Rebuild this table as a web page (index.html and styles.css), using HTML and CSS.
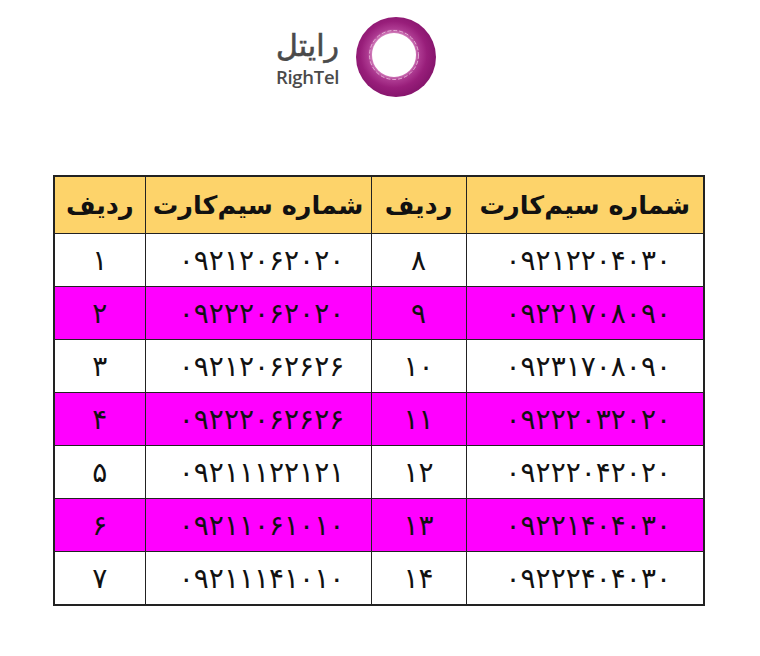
FILE: index.html
```html
<!DOCTYPE html>
<html lang="fa">
<head>
<meta charset="utf-8">
<title>RighTel</title>
<link rel="stylesheet" href="styles.css">
</head>
<body>
<div class="logo">
  <div class="brand">
    <div class="brand-fa" dir="rtl">رایتل</div>
    <div class="brand-en">RighTel</div>
  </div>
  <svg class="ring" width="82" height="82" viewBox="0 0 82 82">
    <defs>
      <radialGradient id="rg" cx="0.47" cy="0.47" r="0.52">
        <stop offset="0.5" stop-color="#d98cc4"/>
        <stop offset="0.62" stop-color="#ad3a91"/>
        <stop offset="0.8" stop-color="#981e7a"/>
        <stop offset="1" stop-color="#88166e"/>
      </radialGradient>
    </defs>
    <circle cx="41" cy="41" r="40" fill="url(#rg)"/>
    <circle cx="39" cy="39" r="22" fill="#ffffff"/>
    <circle cx="39" cy="39" r="24.5" fill="none" stroke="#f5d4ea" stroke-width="1" stroke-dasharray="4 2" opacity="0.7"/>
  </svg>
</div>

<table class="sims">
  <colgroup>
    <col class="c1"><col class="c2"><col class="c3"><col class="c4">
  </colgroup>
  <thead>
    <tr>
      <th>ردیف</th><th>شماره سیم‌کارت</th><th>ردیف</th><th>شماره سیم‌کارت</th>
    </tr>
  </thead>
  <tbody>
    <tr><td>۱</td><td class="num">۰۹۲۱۲۰۶۲۰۲۰</td><td>۸</td><td class="num">۰۹۲۱۲۲۰۴۰۳۰</td></tr>
    <tr class="pink"><td>۲</td><td class="num">۰۹۲۲۲۰۶۲۰۲۰</td><td>۹</td><td class="num">۰۹۲۲۱۷۰۸۰۹۰</td></tr>
    <tr><td>۳</td><td class="num">۰۹۲۱۲۰۶۲۶۲۶</td><td>۱۰</td><td class="num">۰۹۲۳۱۷۰۸۰۹۰</td></tr>
    <tr class="pink"><td>۴</td><td class="num">۰۹۲۲۲۰۶۲۶۲۶</td><td>۱۱</td><td class="num">۰۹۲۲۲۰۳۲۰۲۰</td></tr>
    <tr><td>۵</td><td class="num">۰۹۲۱۱۱۲۲۱۲۱</td><td>۱۲</td><td class="num">۰۹۲۲۲۰۴۲۰۲۰</td></tr>
    <tr class="pink"><td>۶</td><td class="num">۰۹۲۱۱۰۶۱۰۱۰</td><td>۱۳</td><td class="num">۰۹۲۲۱۴۰۴۰۳۰</td></tr>
    <tr><td>۷</td><td class="num">۰۹۲۱۱۱۴۱۰۱۰</td><td>۱۴</td><td class="num">۰۹۲۲۲۴۰۴۰۳۰</td></tr>
  </tbody>
</table>
</body>
</html>
```

FILE: styles.css
```css
html, body {
  margin: 0;
  padding: 0;
  background: #ffffff;
}
body {
  width: 760px;
  height: 656px;
  font-family: "DejaVu Sans", sans-serif;
  color: #111;
}
.logo {
  display: flex;
  align-items: center;
  gap: 16px;
  margin-left: 276px;
  padding-top: 16px;
  height: 82px;
}
.brand {
  display: flex;
  flex-direction: column;
  align-items: center;
  color: #4a4a4a;
  padding-top: 4px;
}
.brand-fa {
  font-size: 30px;
  font-weight: normal;
  line-height: 30px;
  -webkit-text-stroke: 0.6px #4a4a4a;
  padding-bottom: 6px;
}
.brand-en {
  font-family: "Open Sans", "Liberation Sans", sans-serif;
  font-weight: 600;
  font-size: 18.5px;
  line-height: 20px;
  letter-spacing: -0.3px;
}
.ring {
  display: block;
}
.sims {
  margin-top: 77px;
  margin-left: 53px;
  border-collapse: collapse;
  width: 650px;
  table-layout: fixed;
  border: 2px solid #222;
}
.c1 { width: 91px; }
.c2 { width: 226px; }
.c3 { width: 95px; }
.c4 { width: 238px; }
.sims th, .sims td {
  border: 1.5px solid #222;
  text-align: center;
  padding: 0;
}
.sims th {
  background: #fdd36a;
  height: 56px;
  font-size: 25.5px;
  font-weight: bold;
  direction: rtl;
}
.sims td {
  height: 52px;
  font-size: 28px;
}
.sims td.num {
  letter-spacing: 7px;
  text-indent: 7px;
  direction: ltr;
}
.sims tr.pink td {
  background: #ff00ff;
}
```
